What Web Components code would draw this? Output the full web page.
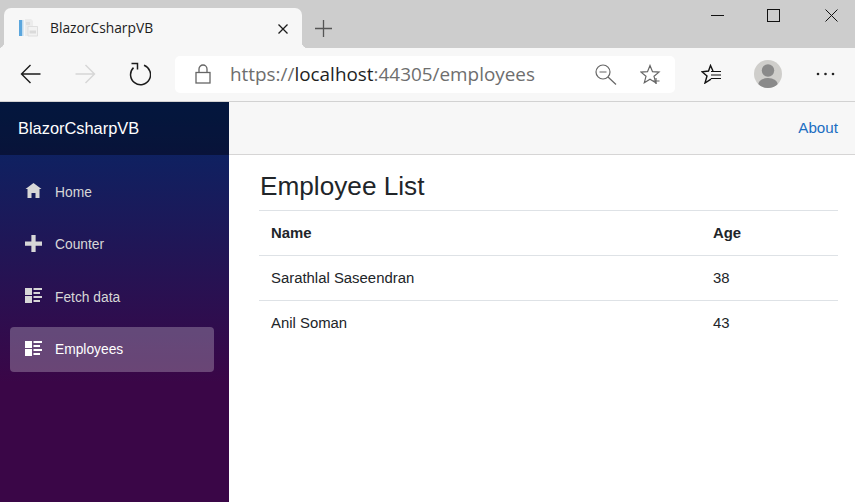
<!DOCTYPE html>
<html lang="en"><head><meta charset="utf-8"><title>BlazorCsharpVB</title>
<style>
html,body{margin:0;padding:0;height:100%;overflow:hidden;background:#fff}
body{display:flex;flex-direction:column;width:855px;height:502px;font-family:"Liberation Sans",Arial,sans-serif}
</style></head><body>
<browser-tabstrip title-text="BlazorCsharpVB"></browser-tabstrip>
<browser-toolbar></browser-toolbar>
<app-shell>
  <app-sidebar slot="side" brand="BlazorCsharpVB">
    <nav-item icon="home" label="Home"></nav-item>
    <nav-item icon="plus" label="Counter"></nav-item>
    <nav-item icon="list" label="Fetch data"></nav-item>
    <nav-item icon="list" label="Employees" active></nav-item>
  </app-sidebar>
  <app-toprow slot="top"><a href="#">About</a></app-toprow>
  <employee-list heading="Employee List"></employee-list>
</app-shell>
<script>
const def=(n,html)=>customElements.define(n,class extends HTMLElement{
  constructor(){super();this.attachShadow({mode:'open'}).innerHTML=typeof html==='function'?html(this):html;}
  connectedCallback(){if(typeof html==='function')this.shadowRoot.innerHTML=html(this);}
});
def('browser-tabstrip',el=>`<style>
:host{display:flex;height:48px;background:#cdcdcd;flex:none;box-sizing:border-box;padding:8px 0 0 4px;font-family:"Open Sans","Noto Sans",sans-serif}
.tab{position:relative;width:298px;height:40px;background:#f7f7f7;border-radius:7px 7px 0 0;display:flex;align-items:center;box-sizing:border-box;padding:0 13px 0 14px;color:#1d1d1d;font-size:13.8px}
.tab::before,.tab::after{content:"";position:absolute;bottom:0;width:6px;height:6px}
.tab::before{left:-6px;background:radial-gradient(circle at 0 0,transparent 6px,#f7f7f7 6.5px)}
.tab::after{right:-6px;background:radial-gradient(circle at 100% 0,transparent 6px,#f7f7f7 6.5px)}
.fav{flex:none;margin-right:12px;margin-top:0}
.t{flex:1;margin-top:-1px}
.plus{margin-left:13px;margin-top:12px;flex:none}
.win{margin-left:auto;display:flex;align-items:flex-start;margin-top:-8px;padding-right:17px}
.win svg{display:block;margin-top:9px}
</style>
<div class="tab">
<svg class="fav" width="20" height="20" viewBox="0 0 20 20"><rect x="1" y="2" width="3.500" height="16" fill="#5ba6dd"/><rect x="4.500" y="2" width="1.500" height="16" fill="#d8e8f3"/><path d="M7 1h6l2 2v15H7z" fill="#ececec"/><path d="M10 8.500h9.500V18H10z" fill="#f2f2f2" stroke="#d9d9d9" stroke-width=".8"/><path d="M11.500 12.500h6.500v3h-6.500z" fill="#dadada"/><path d="M8 4h4v3H8z" fill="#dedede"/></svg>
<span class="t">${el.getAttribute('title-text')||''}</span>
<svg width="12" height="12" viewBox="0 0 12 12" style="margin-top:2px"><path d="M1.500 1.500l9 9M10.500 1.500l-9 9" stroke="#1c1c1c" stroke-width="1.300"/></svg>
</div>
<svg class="plus" width="17" height="17" viewBox="0 0 17 17"><path d="M8.500 0v17M0 8.500h17" stroke="#555" stroke-width="1.300"/></svg>
<div class="win">
<svg width="13" height="13" viewBox="0 0 13 13"><path d="M0 6.500h13" stroke="#111" stroke-width="1"/></svg>
<svg style="margin-left:43px" width="13" height="13" viewBox="0 0 13 13"><rect x=".5" y=".5" width="12" height="12" fill="none" stroke="#111"/></svg>
<svg style="margin-left:45px" width="13" height="13" viewBox="0 0 13 13"><path d="M.5.500l12 12M12.500.500l-12 12" stroke="#111" stroke-width="1"/></svg>
</div>`);
def('browser-toolbar',`<style>
:host{display:flex;align-items:center;height:54px;flex:none;box-sizing:border-box;background:#f7f7f7;border-bottom:1px solid #d2d2d2;padding:0 0 1px 3px;font-family:"Open Sans","Noto Sans",sans-serif}
.b{width:55px;display:flex;justify-content:center;align-items:center;flex:none}
svg{display:block}
.addr{width:500px;height:37px;margin-left:7px;background:#fff;border-radius:5px;display:flex;align-items:center;box-sizing:border-box;padding-left:20px;font-size:18.9px;color:#6e6e6e;flex:none}
.u{margin-left:19px;flex:1;white-space:nowrap}
.u b{font-weight:400;color:#1f1f1f}
</style>
<div class="b"><svg width="21" height="20" viewBox="0 0 21 20"><path d="M20.500 10H1.500M10.500 1l-9 9 9 9" fill="none" stroke="#1c1c1c" stroke-width="1.400"/></svg></div>
<div class="b"><svg width="21" height="20" viewBox="0 0 21 20"><path d="M.5 10h19M10.500 1l9 9-9 9" fill="none" stroke="#d6d6d6" stroke-width="1.400"/></svg></div>
<div class="b"><svg width="22" height="24" viewBox="0 0 22 24" style="margin-left:-1px"><path d="M15 3.300A10 10 0 1 1 4.500 5.600" fill="none" stroke="#1c1c1c" stroke-width="1.500"/><path d="M2.500 1.500H8.500V7.500" fill="none" stroke="#1c1c1c" stroke-width="1.500"/></svg></div>
<div class="addr">
<svg width="16" height="20" viewBox="0 0 16 20"><rect x="1" y="8.500" width="14" height="10.500" fill="none" stroke="#666" stroke-width="1.300"/><path d="M4 8.500V5a4 4 0 0 1 8 0v3.500" fill="none" stroke="#666" stroke-width="1.300"/></svg>
<span class="u">https://<b>localhost</b>:44305/employees</span>
<svg width="22" height="21" viewBox="0 0 22 21" style="margin-right:23px"><circle cx="8" cy="8" r="7" fill="none" stroke="#666" stroke-width="1.200"/><path d="M4.500 8h7M13 13l8 7.500" fill="none" stroke="#666" stroke-width="1.200"/></svg>
<svg width="21" height="21" viewBox="0 0 21 21" style="margin-right:14px"><path d="M10 1.500l2.500 6.200 6.500.4-5 4.200 1.700 6.400L10 15.200l-5.700 3.500L6 12.300 1 8.100l6.500-.4z" fill="none" stroke="#666" stroke-width="1.200"/><path d="M16 14v6M13 17h6.500" stroke="#666" stroke-width="1.200"/></svg>
</div>
<div class="b" style="width:72px"><svg width="21" height="20" viewBox="0 0 21 20"><path d="M12 7L9.500 1.500 7.500 7 1 7.800l5 4.200L4 19l6-3.800" fill="none" stroke="#111" stroke-width="1.400"/><path d="M10 7.500h10M10 11h10M10 14.500h10" stroke="#111" stroke-width="1.200"/></svg></div>
<div class="b" style="width:42px"><svg width="28" height="28" viewBox="0 0 28 28"><defs><clipPath id="c"><circle cx="14" cy="14" r="14"/></clipPath></defs><circle cx="14" cy="14" r="14" fill="#cfcecb"/><g clip-path="url(#c)" fill="#8a8a8a"><circle cx="14" cy="10.500" r="6.200"/><ellipse cx="14" cy="25" rx="10" ry="7"/></g></svg></div>
<div class="b" style="width:72px"><svg width="19" height="4" viewBox="0 0 19 4" fill="#222"><circle cx="2" cy="2" r="1.300"/><circle cx="9.500" cy="2" r="1.300"/><circle cx="17" cy="2" r="1.300"/></svg></div>`);
def('app-shell',`<style>
:host{display:grid;grid-template-columns:229px 1fr;grid-template-rows:53px 1fr;flex:1;min-height:0}
::slotted([slot=side]){grid-row:1/3}
</style><slot name="side"></slot><slot name="top"></slot><main style="min-width:0"><slot></slot></main>`);
const icons={
home:['0 0 8 7.500',17,15,'<path d="M4 0L0 3h1v4.500h2V5h2v2.500h2V3h1z"/>'],
plus:['0 0 8 8',17,17,'<path d="M3 0v3H0v2h3v3h2V5h3V3H5V0z"/>'],
list:['0 0 17 15',17,15,'<path d="M0 0h7v7H0zM0 8h7v7H0zM8.500 0H17v2H8.500zM8.500 4H15v2H8.500zM8.500 8H17v2H8.500zM8.500 12H15v2H8.500z"/>']};
def('app-sidebar',el=>`<style>
:host{display:flex;flex-direction:column;background:linear-gradient(180deg,#052767 0%,#3a0647 70%);color:#fff}
.brand{height:53px;flex:none;background:rgba(0,0,0,.4);display:flex;align-items:center;padding-left:18px;font-size:16.4px;box-sizing:border-box;padding-bottom:1px}
nav{display:flex;flex-direction:column;gap:7.500px;padding:14.500px 15px 0 10px}
</style><div class="brand">${el.getAttribute('brand')||''}</div><nav><slot></slot></nav>`);
def('nav-item',el=>{const a=el.hasAttribute('active');const [vb,w,h,p]=icons[el.getAttribute('icon')];
return `<style>
:host{display:flex;align-items:center;height:45px;border-radius:4px;font-size:13.8px;color:${a?'#fff':'#d7d7d7'};${a?'background:rgba(255,255,255,.25);':''}box-sizing:border-box;padding-left:15px}
.i{width:30px;flex:none;display:flex;margin-top:-3px}
svg{display:block;fill:currentColor}
</style><span class="i"><svg width="${w}" height="${h}" viewBox="${vb}">${p}</svg></span><span>${el.getAttribute('label')||''}</span>`});
def('app-toprow',`<style>
:host{display:flex;justify-content:flex-end;align-items:center;background:#f7f7f7;border-bottom:1px solid #d6d5d5;box-sizing:border-box;padding:0 17px 1px 0;font-size:15.2px}
::slotted(a){color:#1b6ec2;text-decoration:none}
</style><slot></slot>`);
def('employee-row',el=>{const b=el.hasAttribute('head');return `<style>
:host{display:grid;grid-template-columns:442px 1fr;height:45px;box-sizing:border-box;border-top:1px solid #dee2e6;align-items:center;font-size:14.9px;font-weight:${b?700:400};color:#212529;padding-left:12px}
</style><span>${el.getAttribute('name')}</span><span>${el.getAttribute('age')}</span>`});
def('employee-list',el=>`<style>
:host{display:block;padding:0 17px 0 30px;color:#212529}
h1{font-size:26.2px;font-weight:400;margin:0;height:55px;box-sizing:border-box;padding:16px 0 0 1px;line-height:31px}
</style><h1>${el.getAttribute('heading')}</h1>
<div><employee-row head name="Name" age="Age"></employee-row><employee-row name="Sarathlal Saseendran" age="38"></employee-row><employee-row name="Anil Soman" age="43"></employee-row></div>`);
</script>
</body></html>
